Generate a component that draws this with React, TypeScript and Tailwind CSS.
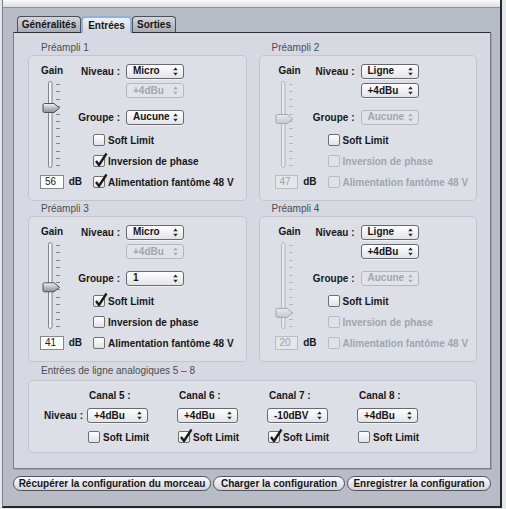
import { useId } from 'react'

const FONT = "font-['Liberation_Sans',Arial,sans-serif]"

function Arrows({ on }: { on: boolean }) {
  return (
    <svg width="5" height="9" viewBox="0 0 5 9" className={on ? 'fill-[#2a2a2a]' : 'fill-[#a9acb3]'}>
      <path d="M2.5 0.5 L4.8 3.2 L0.2 3.2 Z" />
      <path d="M0.2 5.8 L4.8 5.8 L2.5 8.5 Z" />
    </svg>
  )
}

function Popup({ value, on = true, className = 'w-[58px]' }: { value: string; on?: boolean; className?: string }) {
  return (
    <div
      className={`${className} h-[15px] flex items-center justify-between pl-[6px] pr-[5px] rounded-[3px] border text-[10px] font-bold leading-none ${
        on
          ? 'border-[#676a71] bg-gradient-to-b from-white to-[#e3e4e8] text-[#141414] shadow-[0_1px_0_rgba(255,255,255,0.6)]'
          : 'border-[#b5b8bf] bg-[#e1e3e8] text-[#a3a6ad]'
      }`}
    >
      <span>{value}</span>
      <Arrows on={on} />
    </div>
  )
}

function Check({ label, checked = false, on = true }: { label: string; checked?: boolean; on?: boolean }) {
  return (
    <div className="flex items-center gap-[3px] h-[12px]">
      <div
        className={`relative w-[12px] h-[12px] shrink-0 rounded-[2px] border ${
          on ? 'border-[#6d7077] bg-gradient-to-b from-white to-[#e2e3e7]' : 'border-[#b8bbc2] bg-[#e0e2e7]'
        }`}
      >
        {checked && (
          <svg className="absolute -top-[4px] left-[0px]" width="14" height="15" viewBox="0 0 14 15">
            <path d="M2 9 L5 13 L12.5 1.5" fill="none" stroke="#1b1b1b" strokeWidth="2.3" strokeLinejoin="round" />
          </svg>
        )}
      </div>
      <span className={`text-[10px] font-bold whitespace-nowrap ${on ? 'text-[#171717]' : 'text-[#a2a5ad]'}`}>{label}</span>
    </div>
  )
}

function Fader({ value, on }: { value: number; on: boolean }) {
  const id = useId()
  const y = 27 + (56 - value) * 1.22
  const ticks = Array.from({ length: 12 }, (_, i) => 3 + i * 7.4)
  const line = on ? '#7f838a' : '#b3b6bd'
  return (
    <svg width="20" height="87" viewBox="0 0 20 87">
      <defs>
        <linearGradient id={id} x1="0" y1="0" x2="0" y2="1">
          <stop offset="0" stopColor={on ? '#f4f4f6' : '#eceef1'} />
          <stop offset="0.5" stopColor={on ? '#b9bcc2' : '#d6d8dd'} />
          <stop offset="1" stopColor={on ? '#8d9097' : '#c4c7cd'} />
        </linearGradient>
      </defs>
      <rect x="6.5" y="0.5" width="3.5" height="86" rx="1.75" fill={on ? '#f3f4f6' : '#e6e8ec'} stroke={line} />
      {ticks.map(t => (
        <line key={t} x1="14" x2="18" y1={Math.round(t) + 0.5} y2={Math.round(t) + 0.5} stroke={line} />
      ))}
      <g transform={`translate(0 ${y.toFixed(1)})`}>
        <path
          d="M2.5 -4.5 H12 L17.5 0 L12 4.5 H2.5 Q1 4.5 1 3 V-3 Q1 -4.5 2.5 -4.5 Z"
          fill={`url(#${id})`}
          stroke={on ? '#4d5057' : '#a4a7ae'}
        />
      </g>
    </svg>
  )
}

type PreampProps = {
  title: string
  niveau: string
  subOn: boolean
  groupe: string
  groupeOn: boolean
  soft: boolean
  inv: boolean
  invOn: boolean
  phantom: boolean
  phantomOn: boolean
  gain: number
  gainOn: boolean
  right?: boolean
}

function Preamp(p: PreampProps) {
  return (
    <div>
      <div className="h-[12px] leading-[12px] mb-[1px] pl-[13px] text-[10px] text-[#4b4d52]">{p.title}</div>
      <div className="h-[146px] rounded-[5px] border border-[#c3c6ce] bg-[#dcdfe6] flex">
        {/* gain column */}
        <div className={`${p.right ? 'ml-[15px]' : 'ml-[11px]'} w-[42px] pt-[8px] flex flex-col`}>
          <div className={`h-[14px] leading-[14px] text-[10px] font-bold text-[#171717] ${p.right ? 'ml-[4px]' : 'ml-[1px]'}`}>Gain</div>
          <div className={`mt-[3px] h-[87px] ${p.right ? 'ml-0' : 'ml-[2px]'}`}>
            <Fader value={p.gain} on={p.gainOn} />
          </div>
          <div className="mt-[6px] flex items-center gap-[5px]">
            <div
              className={`w-[24px] h-[14px] border text-[10px] leading-[12px] pl-[4px] ${
                p.gainOn ? 'border-[#85888f] bg-white text-[#1a1a1a]' : 'border-[#b9bcc3] bg-[#e4e6ea] text-[#a0a3aa]'
              }`}
            >
              {p.gain}
            </div>
            <span className="text-[10px] font-bold text-[#171717]">dB</span>
          </div>
        </div>
        {/* controls column */}
        <div className="pt-[7px] flex flex-col">
          <div className="flex items-center gap-[6px] h-[16px]">
            <div className="w-[38px] flex justify-end whitespace-nowrap text-[10px] font-bold text-[#171717]">Niveau :</div>
            <Popup value={p.niveau} />
          </div>
          <div className="flex items-center gap-[6px] h-[15px] mt-[4px]">
            <div className="w-[38px]" />
            <Popup value="+4dBu" on={p.subOn} />
          </div>
          <div className="flex items-center gap-[6px] h-[16px] mt-[11px]">
            <div className="w-[38px] flex justify-end whitespace-nowrap text-[10px] font-bold text-[#171717]">Groupe :</div>
            <Popup value={p.groupe} on={p.groupeOn} />
          </div>
          <div className="pl-[11px] mt-[9px] flex flex-col gap-[9px]">
            <Check label="Soft Limit" checked={p.soft} />
            <Check label="Inversion de phase" checked={p.inv} on={p.invOn} />
            <Check label="Alimentation fantôme 48 V" checked={p.phantom} on={p.phantomOn} />
          </div>
        </div>
      </div>
    </div>
  )
}

const PREAMPS: PreampProps[] = [
  { title: 'Préampli 1', niveau: 'Micro', subOn: false, groupe: 'Aucune', groupeOn: true, soft: false, inv: true, invOn: true, phantom: true, phantomOn: true, gain: 56, gainOn: true },
  { title: 'Préampli 2', niveau: 'Ligne', subOn: true, groupe: 'Aucune', groupeOn: false, soft: false, inv: false, invOn: false, phantom: false, phantomOn: false, gain: 47, gainOn: false, right: true },
  { title: 'Préampli 3', niveau: 'Micro', subOn: false, groupe: '1', groupeOn: true, soft: true, inv: false, invOn: true, phantom: false, phantomOn: true, gain: 41, gainOn: true },
  { title: 'Préampli 4', niveau: 'Ligne', subOn: true, groupe: 'Aucune', groupeOn: false, soft: false, inv: false, invOn: false, phantom: false, phantomOn: false, gain: 20, gainOn: false, right: true },
]

const CHANNELS = [
  { name: 'Canal 5 :', level: '+4dBu', soft: false },
  { name: 'Canal 6 :', level: '+4dBu', soft: true },
  { name: 'Canal 7 :', level: '-10dBV', soft: true },
  { name: 'Canal 8 :', level: '+4dBu', soft: false },
]

export default function App() {
  return (
    <div className={`w-[506px] h-[509px] bg-[#e6e7ea] ${FONT} overflow-hidden`}>
      <div className="ml-[2px] w-[500px] h-[508px] border-l border-l-[#7d8088] border-r-2 border-r-[#26272a] border-b-2 border-b-[#26272a] bg-[#b8bcc6] flex flex-col">
        <div className="h-[8px] bg-gradient-to-b from-[#fbfbfc] to-[#dcdee3] border-b border-[#8f929a]" />

        {/* tabs */}
        <div className="ml-[14px] mt-[8px] flex h-[16px] relative z-10">
          <div className="w-[64px] h-[16px] rounded-t-[4px] border border-b-0 border-[#4e5057] bg-gradient-to-b from-[#d4d6db] to-[#a9acb4] text-[10px] font-bold text-[#161616] flex items-center justify-center">
            Généralités
          </div>
          <div className="w-[51px] h-[17px] rounded-t-[4px] border-2 border-b-0 border-[#8fb0e4] bg-gradient-to-b from-[#eef0f4] to-[#d3d6de] text-[10px] font-bold text-[#161616] flex items-center justify-center">
            Entrées
          </div>
          <div className="w-[44px] h-[16px] rounded-t-[4px] border border-b-0 border-[#4e5057] bg-gradient-to-b from-[#d4d6db] to-[#a9acb4] text-[10px] font-bold text-[#161616] flex items-center justify-center">
            Sorties
          </div>
        </div>

        {/* panel */}
        <div className="ml-[10px] w-[478px] h-[437px] border border-[#7b7e86] border-t-[#2e2f33] bg-[#d6d9e1] pt-[9px] pl-[14px] pr-[13px] shadow-[1px_1px_0_rgba(0,0,0,0.15)]">
          <div className="grid grid-cols-2 gap-x-[12px] gap-y-[2px]">
            {PREAMPS.map(p => (
              <Preamp key={p.title} {...p} />
            ))}
          </div>

          <div className="mt-[3px] h-[12px] leading-[12px] mb-[3px] pl-[13px] text-[10px] text-[#4b4d52]">
            Entrées de ligne analogiques 5 – 8
          </div>
          <div className="h-[73px] rounded-[5px] border border-[#c3c6ce] bg-[#dcdfe6] pt-[8px] flex flex-col">
            <div className="flex h-[12px] items-center">
              <div className="w-[60px]" />
              <div className="flex gap-[29px]">
                {CHANNELS.map(c => (
                  <div key={c.name} className="w-[61px] text-[10px] font-bold text-[#171717] whitespace-nowrap">{c.name}</div>
                ))}
              </div>
            </div>
            <div className="flex h-[15px] items-center mt-[7px]">
              <div className="w-[58px] pr-[4px] flex justify-end whitespace-nowrap text-[10px] font-bold text-[#171717]">Niveau :</div>
              <div className="flex gap-[29px]">
                {CHANNELS.map(c => (
                  <Popup key={c.name} value={c.level} className="w-[61px]" />
                ))}
              </div>
            </div>
            <div className="flex h-[12px] items-center mt-[8px]">
              <div className="w-[59px]" />
              <div className="flex gap-[29px]">
                {CHANNELS.map(c => (
                  <div key={c.name} className="w-[61px]">
                    <Check label="Soft Limit" checked={c.soft} />
                  </div>
                ))}
              </div>
            </div>
          </div>
        </div>

        {/* buttons */}
        <div className="ml-[10px] mt-[7px] flex gap-[2px]">
          {[
            ['Récupérer la configuration du morceau', 'w-[198px]'],
            ['Charger la configuration', 'w-[132px]'],
            ['Enregistrer la configuration', 'w-[144px]'],
          ].map(([t, w]) => (
            <div
              key={t}
              className={`${w} h-[15px] rounded-full border border-[#505359] bg-gradient-to-b from-[#fbfbfc] to-[#d3d5da] text-[10px] font-bold text-[#161616] flex items-center justify-center whitespace-nowrap`}
            >
              {t}
            </div>
          ))}
        </div>
      </div>
    </div>
  )
}
